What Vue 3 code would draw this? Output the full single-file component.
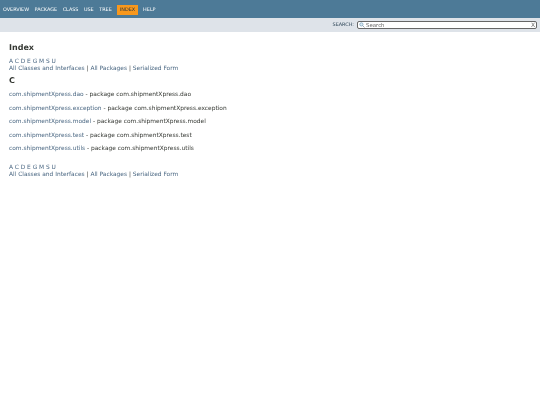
<script setup>
const letters = ['A', 'C', 'D', 'E', 'G', 'M', 'S', 'U']
const navItems = ['OVERVIEW', 'PACKAGE', 'CLASS', 'USE', 'TREE', 'INDEX', 'HELP']
const packages = ['dao', 'exception', 'model', 'test', 'utils'].map(name => 'com.shipmentXpress.' + name)
const links = ['All Classes and Interfaces', 'All Packages', 'Serialized Form']
</script>

<template>
    <div class="page">
        <nav class="top-nav">
            <a
                v-for="item in navItems"
                :key="item"
                :class="['nav-item', { active: item === 'INDEX' }]"
            >{{ item }}</a>
        </nav>
        <div class="sub-nav">
            <label class="search-label">SEARCH:</label>
            <div class="search-box">
                <svg class="search-icon" width="6" height="6" viewBox="0 0 7 7">
                    <circle cx="2.8" cy="2.8" r="1.9" fill="#dcecf5" stroke="#6f9cb8" stroke-width="0.8" />
                    <path d="M4.2 4.2 L6.4 6.4" stroke="#8a9aa5" stroke-width="1" />
                </svg>
                <span class="search-text">Search</span>
                <span class="search-clear">X</span>
            </div>
        </div>
        <main class="content">
            <h1 class="title">Index</h1>
            <div class="letters">
                <a v-for="l in letters" :key="l">{{ l }}</a>
            </div>
            <div class="links">
                <template v-for="(link, i) in links" :key="link">
                    <span v-if="i > 0" class="sep"> | </span><a>{{ link }}</a>
                </template>
            </div>
            <h2 class="letter-title">C</h2>
            <div class="pkg-list">
                <div v-for="pkg in packages" :key="pkg" class="pkg">
                    <a>{{ pkg }}</a> - package {{ pkg }}
                </div>
            </div>
            <div class="letters bottom">
                <a v-for="l in letters" :key="l">{{ l }}</a>
            </div>
            <div class="links">
                <template v-for="(link, i) in links" :key="link">
                    <span v-if="i > 0" class="sep"> | </span><a>{{ link }}</a>
                </template>
            </div>
        </main>
    </div>
</template>

<style scoped>
.page {
    width: 540px;
    height: 405px;
    overflow: hidden;
    background: #ffffff;
    font-family: "DejaVu Sans", sans-serif;
    font-size: 5.9px;
    color: #353833;
    text-rendering: geometricPrecision;
    filter: blur(0.35px);
}

.top-nav {
    height: 18px;
    box-sizing: border-box;
    background: #4d7a97;
    display: flex;
    align-items: center;
    padding: 2px 0 0 3px;
    gap: 5.5px;
}

.nav-item {
    font-size: 4.9px;
    line-height: 7px;
}

.nav-item.active {
    padding: 1.5px 3px;
    margin: 0 -0.5px;
}

.sub-nav {
    height: 14px;
    background: #dee3e9;
    display: flex;
    align-items: center;
    justify-content: flex-end;
    padding: 0 3px 0 0;
    gap: 3px;
}

.search-label {
    font-size: 4.9px;
    color: #2c4557;
}

.search-box {
    width: 180px;
    height: 8px;
    box-sizing: border-box;
    border: 1px solid #666;
    border-radius: 2px;
    background: #ffffff;
    display: flex;
    align-items: center;
    padding: 0 1px;
    font-size: 5.4px;
    color: #666;
}

.search-icon {
    flex: none;
    margin-right: 1px;
}

.search-text {
    flex: 1;
    padding-top: 1px;
}

.search-clear {
    font-size: 6px;
    color: #666;
    padding-top: 1px;
}

.content {
    padding: 10px 9px 0;
}

.title {
    margin: 0;
    font-size: 8px;
    font-weight: bold;
    line-height: 12px;
}

.letters {
    margin-top: 5px;
    line-height: 7px;
    display: flex;
    gap: 1.8px;
}

.letters.bottom {
    margin-top: 11px;
}

.links {
    line-height: 7px;
}

a {
    color: #4a6782;
}

.nav-item {
    color: #ffffff;
}

.nav-item.active {
    background: #f8981d;
    color: #253441;
}

.letter-title {
    margin: 2px 0 0;
    font-size: 8px;
    font-weight: bold;
    line-height: 11px;
}

.pkg-list {
    margin-top: 6px;
    display: flex;
    flex-direction: column;
    gap: 6px;
}

.pkg {
    line-height: 7.5px;
}
</style>

<style>
html, body {
    margin: 0;
    background: #ffffff;
}
</style>
